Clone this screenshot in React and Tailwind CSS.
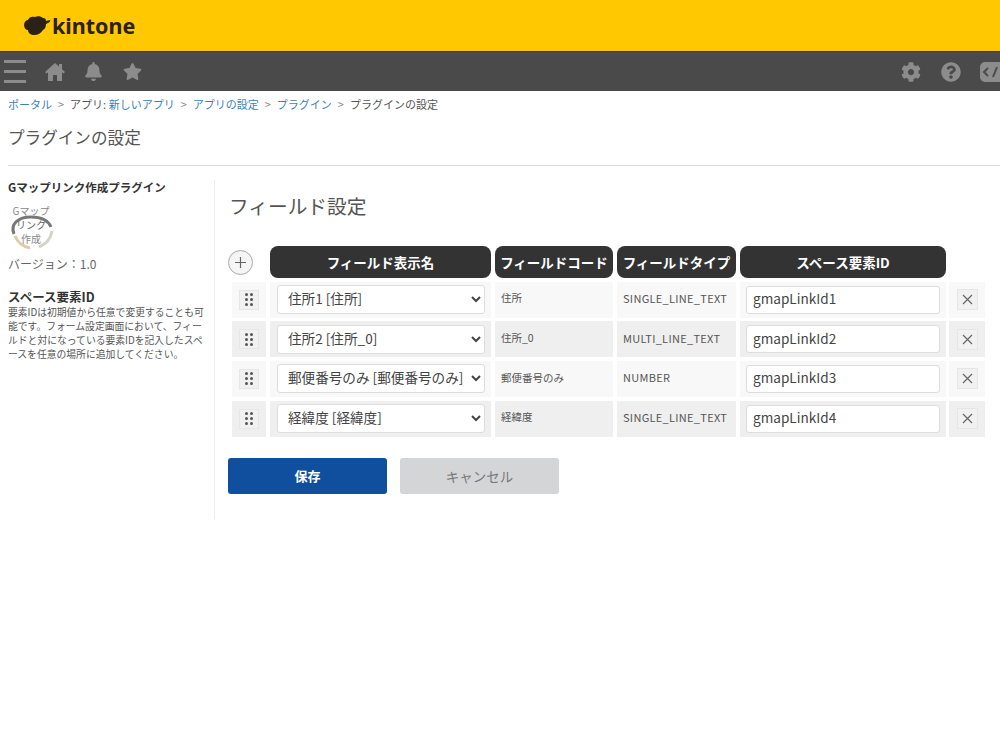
import { FaBell, FaCog, FaQuestionCircle, FaStar } from "react-icons/fa";

const fields = [
  { label: "住所1 [住所]", code: "住所", type: "SINGLE_LINE_TEXT", id: "gmapLinkId1" },
  { label: "住所2 [住所_0]", code: "住所_0", type: "MULTI_LINE_TEXT", id: "gmapLinkId2" },
  { label: "郵便番号のみ [郵便番号のみ]", code: "郵便番号のみ", type: "NUMBER", id: "gmapLinkId3" },
  { label: "経緯度 [経緯度]", code: "経緯度", type: "SINGLE_LINE_TEXT", id: "gmapLinkId4" },
];

function Logo() {
  return (
    <svg width="27" height="20" viewBox="0 0 27 20" fill="#2b2116">
      <path d="M0 9c0-3 2-5 4-5 1-3 4-4 7-3 2-1 6-1 8 1 2 0 3 1 3 3l4-1c1 1-1 3-4 4 0 3-1 5-3 6-2 3-5 5-9 5-3 0-6-2-6-5C2 14 0 12 0 9z" />
    </svg>
  );
}

function HomeIcon() {
  return (
    <svg className="ml-[19px]" width="20" height="20" viewBox="0 0 20 20" fill="#8c8c8c">
      <path d="M10 1L0 10l1.5 1.5L3 10.2V19h5v-6h4v6h5v-8.8l1.5 1.3L20 10l-3-2.7V2h-3v2.6z" />
    </svg>
  );
}

function PluginIcon() {
  return (
    <div className="relative w-[46px] h-[46px] mt-[10px] text-[10px] leading-[14px] text-[#888] text-center">
      <svg className="absolute inset-0" width="46" height="46" viewBox="0 0 46 46" fill="none">
        <path d="M6 30C2 20 10 13 23 13c9 0 17 3 20 10" stroke="#777" strokeWidth="3" />
        <path d="M7 32c3 7 9 11 15 12" stroke="#e0c9a6" strokeWidth="3" />
        <path d="M44 27c-1 7-6 13-13 16" stroke="#d8d4c4" strokeWidth="3" />
      </svg>
      <div className="relative flex flex-col items-center">
        <span className="whitespace-nowrap">Gマップ</span>
        <span className="whitespace-nowrap text-[#666]">リンク</span>
        <span className="whitespace-nowrap">作成</span>
      </div>
    </div>
  );
}

function HeaderCell({ children }) {
  return (
    <div className="h-8 flex items-center justify-center rounded-lg bg-[#333333] text-white text-[13.5px] font-bold whitespace-nowrap">
      {children}
    </div>
  );
}

function FieldRow({ field, index }) {
  const cell = index % 2 === 0 ? "bg-[#f8f8f8]" : "bg-[#efefef]";
  return (
    <>
      <div className={`${cell} h-9 flex items-center justify-center`}>
        <div className="w-5 h-5 flex items-center justify-center bg-[#f1f1f1] border border-[#e6e6e6]">
          <div className="grid grid-cols-2 gap-[2px]">
            {[0, 1, 2, 3, 4, 5].map((dot) => (
              <span key={dot} className="w-[3px] h-[3px] rounded-full bg-[#555]" />
            ))}
          </div>
        </div>
      </div>
      <div className={`${cell} h-9 flex items-center pl-[7px]`}>
        <select
          defaultValue={field.label}
          className="w-[208px] h-[29px] pl-[6px] pb-[3px] rounded-[3px] border border-[#dddddd] bg-white text-[13.6px] text-[#444]"
        >
          <option>{field.label}</option>
        </select>
      </div>
      <div className={`${cell} h-9 flex items-center pl-[6px] pb-[3px] text-[10.5px] text-[#555]`}>{field.code}</div>
      <div className={`${cell} h-9 flex items-center pl-[6px] pb-[3px] text-[11px] tracking-[0.3px] text-[#555] whitespace-nowrap`}>
        {field.type}
      </div>
      <div className={`${cell} h-9 flex items-center pl-[6px]`}>
        <input
          readOnly
          value={field.id}
          className="w-[194px] h-[28px] px-[6px] pb-[3px] rounded-[3px] border border-[#dddddd] bg-white text-[13.6px] text-[#444]"
        />
      </div>
      <div className={`${cell} h-9 -ml-px flex items-center justify-center`}>
        <div className="w-[21px] h-[21px] flex items-center justify-center bg-[#f1f1f1] border border-[#e6e6e6]">
          <svg width="11" height="11" viewBox="0 0 11 11" stroke="#666" strokeWidth="1.2">
            <path d="M1 1l9 9M10 1l-9 9" />
          </svg>
        </div>
      </div>
    </>
  );
}

export default function App() {
  return (
    <div className="w-[1000px] h-[750px] overflow-hidden bg-white text-[#555] font-['Noto_Sans_CJK_JP',sans-serif]">
      {/* top bars */}
      <div className="h-[51px] bg-[#ffc800] flex items-center pl-[24px] gap-[1px]">
        <Logo />
        <span className="font-['Noto_Sans',sans-serif] font-bold text-[21.5px] leading-none text-[#2b2116]">kintone</span>
      </div>
      <div className="h-10 bg-[#4a4a4a] border-t border-[#3a3a3a] flex items-center pl-[4px] text-[#8c8c8c]">
        <div className="flex flex-col gap-[7px] w-[22px]">
          <span className="h-[3px] bg-[#8c8c8c]" />
          <span className="h-[3px] bg-[#8c8c8c]" />
          <span className="h-[3px] bg-[#8c8c8c]" />
        </div>
        <HomeIcon />
        <FaBell size={19} className="ml-[19px]" />
        <FaStar size={19} className="ml-[20px]" />
        <FaCog size={20} className="ml-auto" />
        <FaQuestionCircle size={20} className="ml-[20px]" />
        <svg className="ml-[19px] shrink-0" width="20" height="20" viewBox="0 0 20 20">
          <rect width="30" height="20" rx="5" fill="#8c8c8c" />
          <path d="M8 6l-4 4 4 4M22 6l4 4-4 4M17 5l-4 10" fill="none" stroke="#4a4a4a" strokeWidth="2" />
        </svg>
      </div>

      {/* breadcrumb */}
      <div className="h-[26px] pl-2 flex items-center text-[11px] whitespace-nowrap">
        <span className="text-[#3b83b5]">ポータル</span>
        <span className="mx-[6px] text-[#888]">&gt;</span>
        <span>アプリ:&nbsp;</span>
        <span className="text-[#3b83b5]">新しいアプリ</span>
        <span className="mx-[6px] text-[#888]">&gt;</span>
        <span className="text-[#3b83b5]">アプリの設定</span>
        <span className="mx-[6px] text-[#888]">&gt;</span>
        <span className="text-[#3b83b5]">プラグイン</span>
        <span className="mx-[6px] text-[#888]">&gt;</span>
        <span>プラグインの設定</span>
      </div>
      <div className="ml-2 h-[49px] pt-[7px] border-b border-[#dddddd] text-[16.6px] leading-[26px] text-[#555]">
        プラグインの設定
      </div>

      <div className="flex mt-[14px] ml-2">
        {/* sidebar */}
        <div className="w-[207px] h-[339px] shrink-0 border-r border-[#eeeeee]">
          <h2 className="text-[11.5px] leading-[14px] font-bold text-[#333]">Gマップリンク作成プラグイン</h2>
          <PluginIcon />
          <p className="mt-[6px] text-[12px] leading-[16px] text-[#666]">バージョン：1.0</p>
          <h3 className="mt-[17px] text-[12.5px] leading-[16px] font-bold text-[#333]">スペース要素ID</h3>
          <p className="text-[9.8px] leading-[14px] text-[#555] whitespace-nowrap">
            要素IDは初期値から任意で変更することも可
            <br />
            能です。フォーム設定画面において、フィー
            <br />
            ルドと対になっている要素IDを記入したスペ
            <br />
            ースを任意の場所に追加してください。
          </p>
        </div>

        {/* main */}
        <div className="pl-[13px]">
          <h1 className="mt-[10px] ml-px text-[19.7px] leading-[32px] text-[#555]">フィールド設定</h1>
          <div className="mt-[24px] ml-[4px] grid grid-cols-[34px_221px_118px_119px_206px_35px] gap-x-[4px] gap-y-[3.67px]">
            <div className="h-8 flex items-center">
              <div className="w-[25px] h-[25px] -ml-1 rounded-full bg-[#f5f5f5] border border-[#aaaaaa] flex items-center justify-center">
                <svg width="11" height="11" viewBox="0 0 11 11" stroke="#666" strokeWidth="1.2">
                  <path d="M5.5 0v11M0 5.5h11" />
                </svg>
              </div>
            </div>
            <HeaderCell>フィールド表示名</HeaderCell>
            <HeaderCell>フィールドコード</HeaderCell>
            <HeaderCell>フィールドタイプ</HeaderCell>
            <HeaderCell>スペース要素ID</HeaderCell>
            <div />
            {fields.map((field, index) => (
              <FieldRow key={field.id} field={field} index={index} />
            ))}
          </div>
          <div className="flex gap-[13px] mt-[21px]">
            <button className="w-[159px] h-9 rounded-[3px] bg-[#0f4f9e] text-white text-[13px] font-bold">保存</button>
            <button className="w-[159px] h-9 rounded-[3px] bg-[#d4d5d7] text-[#777] text-[13.5px]">キャンセル</button>
          </div>
        </div>
      </div>
    </div>
  );
}
